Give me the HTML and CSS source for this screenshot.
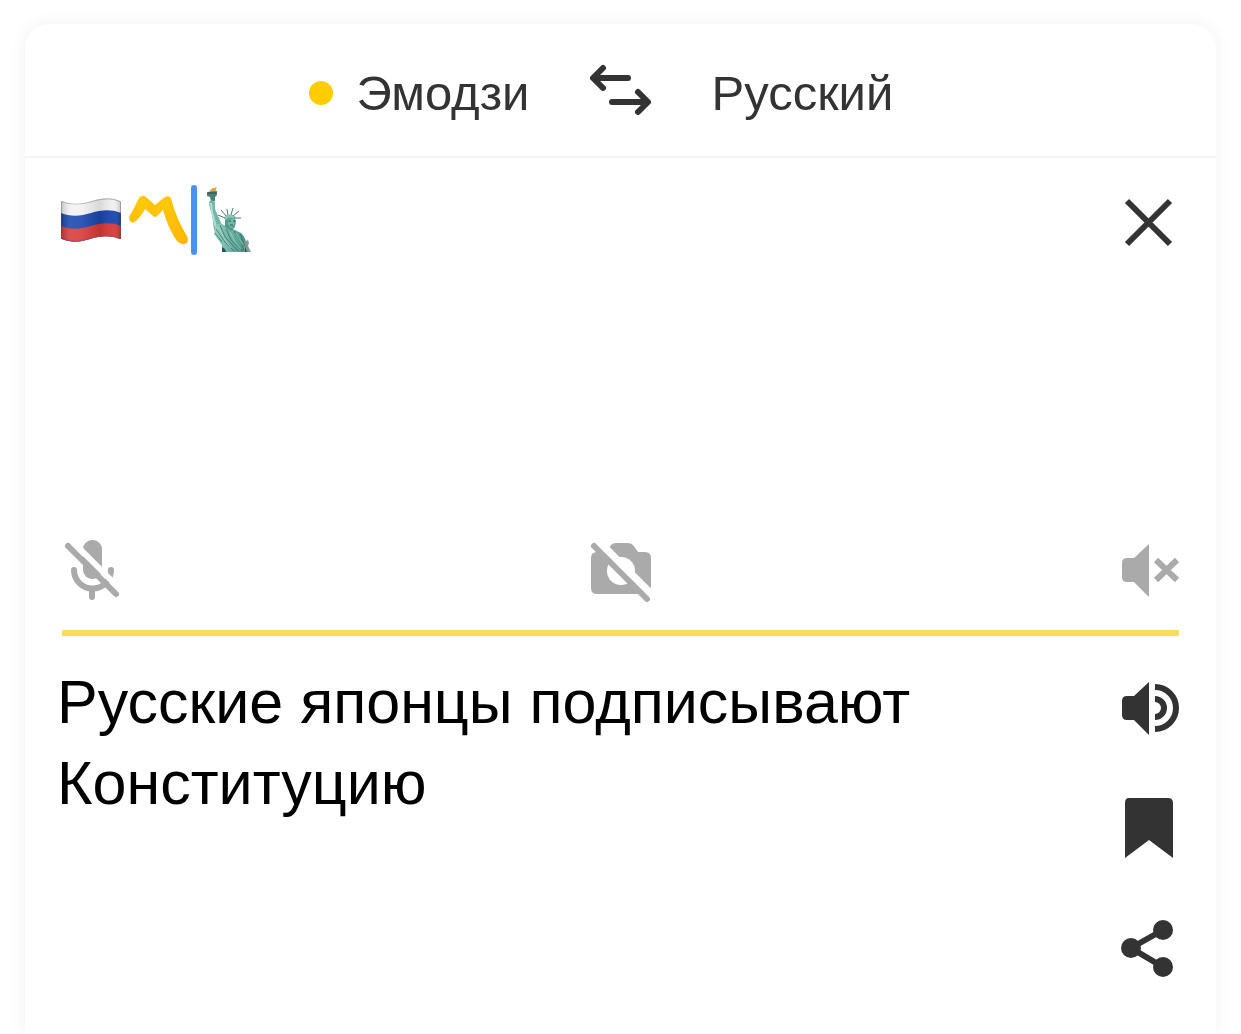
FILE: index.html
```
<!DOCTYPE html>
<html lang="ru">
<head>
    <meta charset="UTF-8">
    <meta name="viewport" content="width=device-width, initial-scale=1.0">
    <title>Переводчик</title>
    <link rel="stylesheet" href="styles.css">
</head>
<body>
    <main class="translator">
        <header class="languages">
            <button class="language source-language" type="button"><span class="dot"></span>Эмодзи</button>
            <button class="icon-button" type="button" aria-label="Поменять языки">
                <svg class="swap-icon" viewBox="0 0 62 54" fill="none" stroke="currentColor" stroke-width="6" stroke-linecap="round" stroke-linejoin="round">
                    <path d="M38 15H4M13 5L3 15L13 25"/>
                    <path d="M22 39H57M48 29L58 39L48 49"/>
                </svg>
            </button>
            <button class="language" type="button">Русский</button>
        </header>

        <section class="source">
            <div class="field">
                <textarea class="source-text" aria-label="Исходный текст"></textarea>
                <div class="emoji-line">
                    <svg class="emoji flag" viewBox="0 0 60 44">
                        <defs>
                            <clipPath id="flag-shape">
                                <path d="M0 4Q0 3 1 3C11 7 21 6 31 3S50 -1 59 3Q60 3 60 4V40Q60 41 59 41C49 37 39 38 29 41S11 45 1 41Q0 41 0 40Z"/>
                            </clipPath>
                            <linearGradient id="flag-shade">
                                <stop offset="0" stop-color="#000" stop-opacity=".2"/>
                                <stop offset=".15" stop-color="#fff" stop-opacity=".12"/>
                                <stop offset=".35" stop-color="#fff" stop-opacity=".1"/>
                                <stop offset=".65" stop-color="#000" stop-opacity=".1"/>
                                <stop offset=".88" stop-color="#fff" stop-opacity=".05"/>
                                <stop offset="1" stop-color="#000" stop-opacity=".2"/>
                            </linearGradient>
                        </defs>
                        <g clip-path="url(#flag-shape)">
                            <rect width="60" height="44" fill="#f1f1f1"/>
                            <path d="M0 15C10 19 20 18 30 15S50 11 60 15V44H0Z" fill="#1846ae"/>
                            <path d="M0 28C10 32 20 31 30 28S50 24 60 28V44H0Z" fill="#d73936"/>
                            <rect width="60" height="44" fill="url(#flag-shade)"/>
                            <path d="M0 4Q0 3 1 3C11 7 21 6 31 3S50 -1 59 3Q60 3 60 4V40Q60 41 59 41C49 37 39 38 29 41S11 45 1 41Q0 41 0 40Z" fill="none" stroke="#555" stroke-opacity=".35" stroke-width="2"/>
                        </g>
                    </svg>
                    <svg class="emoji mark" viewBox="0 0 60 50">
                        <defs>
                            <linearGradient id="mark-fill" x2="0" y2="1">
                                <stop offset="0" stop-color="#ffca0b"/>
                                <stop offset="1" stop-color="#ffb606"/>
                            </linearGradient>
                        </defs>
                        <path d="M10 3Q13 -1 17 2L26 10L36 2Q40 0 42 3C45 15 50 28 58 41Q61 48 55 49Q52 50 48 46C41 36 37 25 34 15L29 20Q26 24 23 20L16 14C14 18 11 22 7 26Q3 29 1 26Q-1 23 1 20C5 14 7 8 10 3Z" fill="url(#mark-fill)"/>
                        <path d="M13 4Q15 2 18 4L26 12L36 4Q39 2 40 5C44 18 49 30 57 42" fill="none" stroke="#f5a900" stroke-opacity=".35"/>
                    </svg>
                    <span class="caret"></span>
                    <svg class="emoji statue" viewBox="0 0 46 66">
                        <defs>
                            <linearGradient id="copper" x2="1">
                                <stop offset="0" stop-color="#9bd2c5"/>
                                <stop offset=".5" stop-color="#68ad9f"/>
                                <stop offset="1" stop-color="#448b7d"/>
                            </linearGradient>
                        </defs>
                        <path d="M3 5C2 3 5 3 5 1C7 2 8 0 10 0C8 2 10 4 7 6Z" fill="#dea636"/>
                        <path d="M0 5L10 4L10 8L8 10L8 14L4 14L3 10L0 9Z" fill="#4c7f73"/>
                        <path d="M1 6H9" stroke="#254f48"/>
                        <path d="M2 15L4 13L8 15L8 22L15 38L17 43L12 48L7 43L5 27L3 22Z" fill="#72b6a8"/>
                        <path d="M4 16L5 25L9 40" stroke="#b4ded3" stroke-width="2" fill="none"/>
                        <path d="M8 40Q12 34 17 38L20 40L26 42L34 46C39 50 39 57 43 65H15L15 58L7 47Z" fill="url(#copper)"/>
                        <path d="M37 55L41 53L42 56L41 59L44 65H37Z" fill="#7e9d94"/>
                        <path d="M18 30Q21 26 27 29L29 34L28 40L24 44L18 40Z" fill="#529b8d"/>
                        <path d="M18 32Q22 27 28 31" fill="none" stroke="#8bc5b7" stroke-width="3"/>
                        <path d="M22 32H28L27 38L24 41L21 37Z" fill="#76b9a9"/>
                        <path d="M22 34H24M26 34H28M23 38H26" stroke="#28564e"/>
                        <path d="M18 31L11 28M19 29L14 23M21 28L20 22M24 28L26 21M26 29L32 24M27 31L34 31" stroke="#477d73"/>
                        <path d="M9 42L18 55L27 64M13 38L18 50L31 64M19 42L24 53L36 64M27 44L34 54L37 64M8 46L15 55M33 47L38 59" stroke="#327266" stroke-opacity=".75" fill="none"/>
                        <path d="M12 41L18 53L24 61M23 45L28 55L34 62M29 46L36 58" stroke="#acdccf" stroke-opacity=".7" fill="none"/>
                        <path d="M15 60L18 62L19 65H15ZM38 59L40 65H38Z" fill="#2b554d"/>
                    </svg>
                </div>
                <button class="icon-button clear" type="button" aria-label="Очистить">
                    <svg class="icon" viewBox="0 0 60 60" fill="none" stroke="currentColor" stroke-width="6">
                        <path d="M8 9L51 52M51 9L8 52"/>
                    </svg>
                </button>
            </div>
            <div class="tools">
                <button class="icon-button disabled" type="button" aria-label="Микрофон недоступен">
                    <svg class="icon" viewBox="0 0 60 60" fill="none" stroke="currentColor" stroke-linecap="round">
                        <rect x="21" y="0" width="19" height="39" rx="9" fill="currentColor" stroke="none"/>
                        <path d="M12 30A18 18 0 0 0 49 30V30" stroke-width="6"/>
                        <path d="M30 49V57" stroke-width="6"/>
                        <path d="M9 0L60 51" stroke="#fff" stroke-width="6"/>
                        <path d="M6 6L54 54" stroke-width="6"/>
                    </svg>
                </button>
                <button class="icon-button disabled" type="button" aria-label="Камера недоступна">
                    <svg class="icon" viewBox="0 0 60 60" fill="none" stroke-linecap="round">
                        <path d="M6 12H15L20 5Q22 3 25 3H37Q40 3 42 5L47 12H54Q60 12 60 18V48Q60 54 54 54H6Q0 54 0 48V18Q0 12 6 12Z" fill="currentColor"/>
                        <circle cx="30" cy="31" r="14" fill="#fff"/>
                        <path d="M7 1L64 58" stroke="#fff" stroke-width="8"/>
                        <path d="M3 6L56 59" stroke="currentColor" stroke-width="6"/>
                    </svg>
                </button>
                <button class="icon-button disabled" type="button" aria-label="Озвучивание недоступно">
                    <svg class="icon" viewBox="0 0 60 60">
                        <path d="M8 18H15L30 4V57L15 42H8Q3 42 3 37V23Q3 18 8 18Z" fill="currentColor"/>
                        <path d="M37 20L58 40M58 20L37 40" fill="none" stroke="currentColor" stroke-width="6"/>
                    </svg>
                </button>
            </div>
        </section>

        <section class="result">
            <p class="result-text">Русские японцы подписывают Конституцию</p>
            <div class="actions">
                <button class="icon-button" type="button" aria-label="Прослушать">
                    <svg class="icon" viewBox="0 0 60 60">
                        <path d="M8 18H15L30 4V57L15 42H8Q3 42 3 37V23Q3 18 8 18Z" fill="currentColor"/>
                        <path d="M36 9A21 21 0 0 1 36 51M36 21A9 9 0 0 1 36 39" fill="none" stroke="currentColor" stroke-width="6"/>
                    </svg>
                </button>
                <button class="icon-button" type="button" aria-label="Сохранить">
                    <svg class="icon" viewBox="0 0 60 60">
                        <path d="M10 0H49Q54 0 54 5V60L30 42L6 60V5Q6 0 10 0Z" fill="currentColor"/>
                    </svg>
                </button>
                <button class="icon-button" type="button" aria-label="Поделиться">
                    <svg class="icon" viewBox="0 0 60 60" fill="currentColor">
                        <path d="M44 12L12 30L44 49" fill="none" stroke="currentColor" stroke-width="6"/>
                        <circle cx="44" cy="12" r="10"/>
                        <circle cx="12" cy="30" r="10"/>
                        <circle cx="44" cy="49" r="10"/>
                    </svg>
                </button>
            </div>
        </section>
    </main>
</body>
</html>
```
FILE: styles.css
```
* {
    box-sizing: border-box;
}
body {
    margin: 0;
    padding: 24px 25px 0;
    background-color: #fff;
    font-family: "Liberation Sans", Arial, sans-serif;
    color: #333;
}
.translator {
    min-height: calc(100vh - 24px);
    border-radius: 24px 24px 0 0;
    background-color: #fff;
    box-shadow: 0 0 18px rgba(0, 0, 0, 0.06);
}
button {
    padding: 0;
    border: 0;
    background: none;
    font: inherit;
    color: inherit;
    cursor: pointer;
}
svg {
    display: block;
    overflow: visible;
}
.languages {
    display: grid;
    grid-template-columns: 1fr auto 1fr;
    align-items: center;
    gap: 60px;
    height: 134px;
    border-bottom: 2px solid #f5f5f5;
}
.language {
    justify-self: start;
    padding-top: 6px;
    font-size: 49px;
    line-height: 60px;
}
.source-language {
    display: flex;
    align-items: center;
    gap: 24px;
    justify-self: end;
}
.dot {
    width: 24px;
    height: 24px;
    border-radius: 50%;
    background-color: #fc0;
}
.swap-icon {
    width: 62px;
    height: 54px;
}
.icon {
    width: 60px;
    height: 60px;
}
.source {
    margin: 0 37px;
    border-bottom: 6px solid #ffdb5c;
}
.field {
    position: relative;
    display: flex;
    align-items: flex-start;
    gap: 24px;
    padding-top: 28px;
}
.source-text {
    flex: 1;
    min-width: 0;
    height: 324px;
    padding: 0;
    border: 0;
    outline: 0;
    resize: none;
    background: none;
    font: 61px/70px "Liberation Sans", Arial, sans-serif;
    color: #000;
}
.emoji-line {
    position: absolute;
    top: 27px;
    left: -1px;
    display: flex;
    align-items: center;
    height: 70px;
    pointer-events: none;
}
.flag {
    width: 60px;
    height: 44px;
}
.mark {
    width: 60px;
    height: 50px;
    margin-left: 8px;
}
.caret {
    width: 6px;
    height: 70px;
    margin: 0 10px 0 2px;
    border-radius: 3px;
    background-color: #4791f7;
}
.statue {
    width: 46px;
    height: 66px;
}
.clear {
    margin-top: 6px;
}
.tools {
    display: flex;
    justify-content: space-between;
    padding: 30px 0;
}
.disabled {
    color: #aaa;
}
.result {
    display: flex;
    align-items: flex-start;
    justify-content: space-between;
    gap: 60px;
    padding: 26px 37px 0 32px;
}
.result-text {
    margin: 0;
    font-size: 61px;
    line-height: 81px;
    color: #000;
}
.actions {
    display: flex;
    flex-direction: column;
    gap: 60px;
    padding-top: 16px;
}
```
